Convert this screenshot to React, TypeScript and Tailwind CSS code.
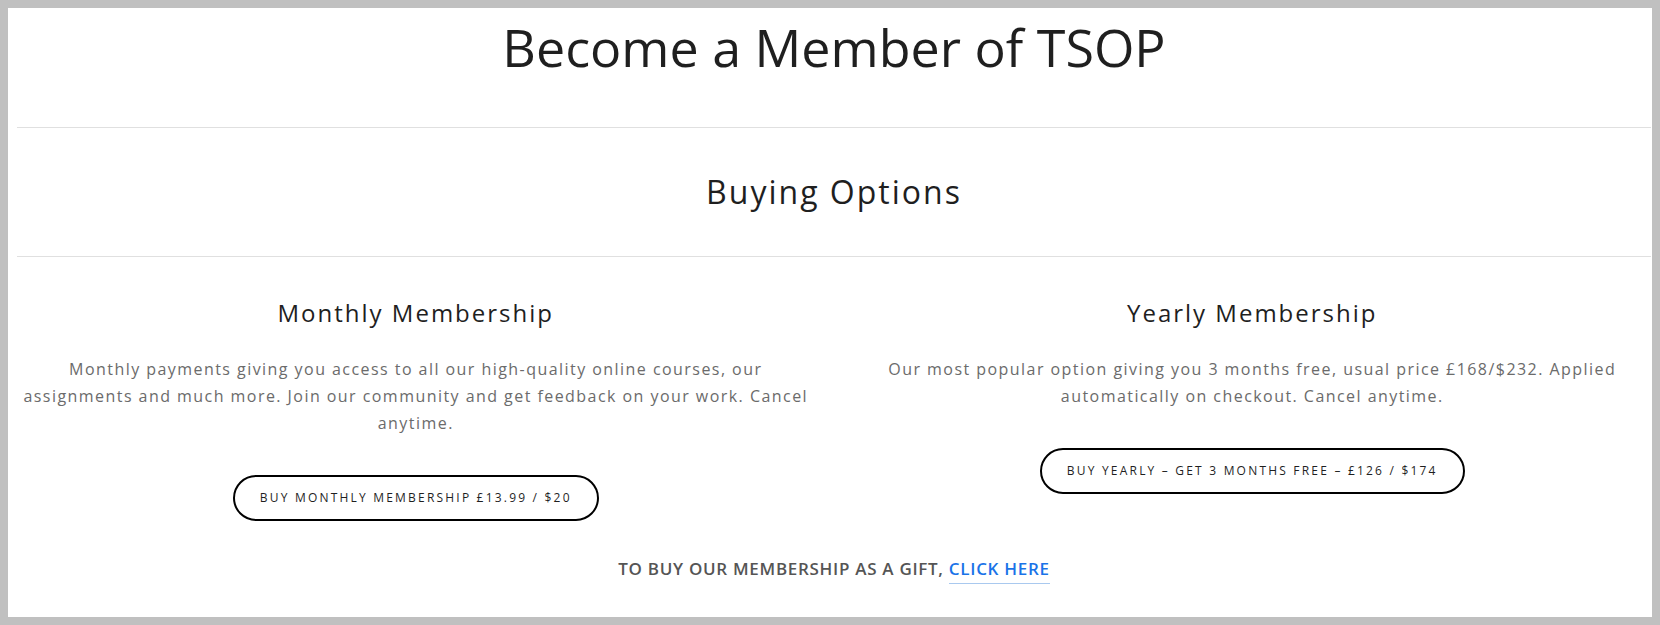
import React from 'react';

const plans = [
  {
    title: 'Monthly Membership',
    text: 'Monthly payments giving you access to all our high-quality online courses, our assignments and much more. Join our community and get feedback on your work. Cancel anytime.',
    cta: 'Buy Monthly Membership £13.99 / $20',
  },
  {
    title: 'Yearly Membership',
    text: 'Our most popular option giving you 3 months free, usual price £168/$232. Applied automatically on checkout. Cancel anytime.',
    cta: 'Buy Yearly – Get 3 Months Free – £126 / $174',
  },
];

export default function App() {
  return (
    <div className="h-[625px] bg-[#c0c0c0] p-2 font-['Open_Sans',sans-serif]">
      <div className="h-full bg-white pl-[9px] pr-px">
        {/* Header */}
        <div className="h-[120px] border-b border-[#e0e0e0] pt-2">
          <h1 className="text-center text-[52px] leading-[62px] text-[#1f1f1f]">
            Become a Member of TSOP
          </h1>
        </div>

        {/* Section title */}
        <div className="flex h-[129px] items-center justify-center border-b border-[#e0e0e0]">
          <h2 className="text-[32px] leading-[40px] tracking-[2px] text-[#1f1f1f]">Buying Options</h2>
        </div>

        {/* Plans */}
        <div className="grid grid-cols-2 gap-[39px] pt-[40px]">
          {plans.map((p) => (
            <div key={p.title} className="flex flex-col items-center text-center">
              <h3 className="text-[24px] leading-[32px] tracking-[2px] text-[#1f1f1f]">{p.title}</h3>
              <p className="mt-[27px] text-[16px] leading-[27px] tracking-[1.45px] text-[#6b6b6b]">
                {p.text}
              </p>
              <button className="mt-[38px] h-[46px] rounded-full border-2 border-black px-[25px] text-[12px] uppercase tracking-[2.2px] text-[#1f1f1f]">
                {p.cta}
              </button>
            </div>
          ))}
        </div>

        {/* Gift */}
        <div className="mt-[36px] text-center text-[17px] font-semibold leading-[24px] tracking-[0.7px] text-[#555]">
          TO BUY OUR MEMBERSHIP AS A GIFT,{' '}
          <a href="#" className="inline-block border-b border-[#a9c9ef] pb-[2px] leading-[24px] text-[#1a73e8]">
            CLICK HERE
          </a>
        </div>
      </div>
    </div>
  );
}
